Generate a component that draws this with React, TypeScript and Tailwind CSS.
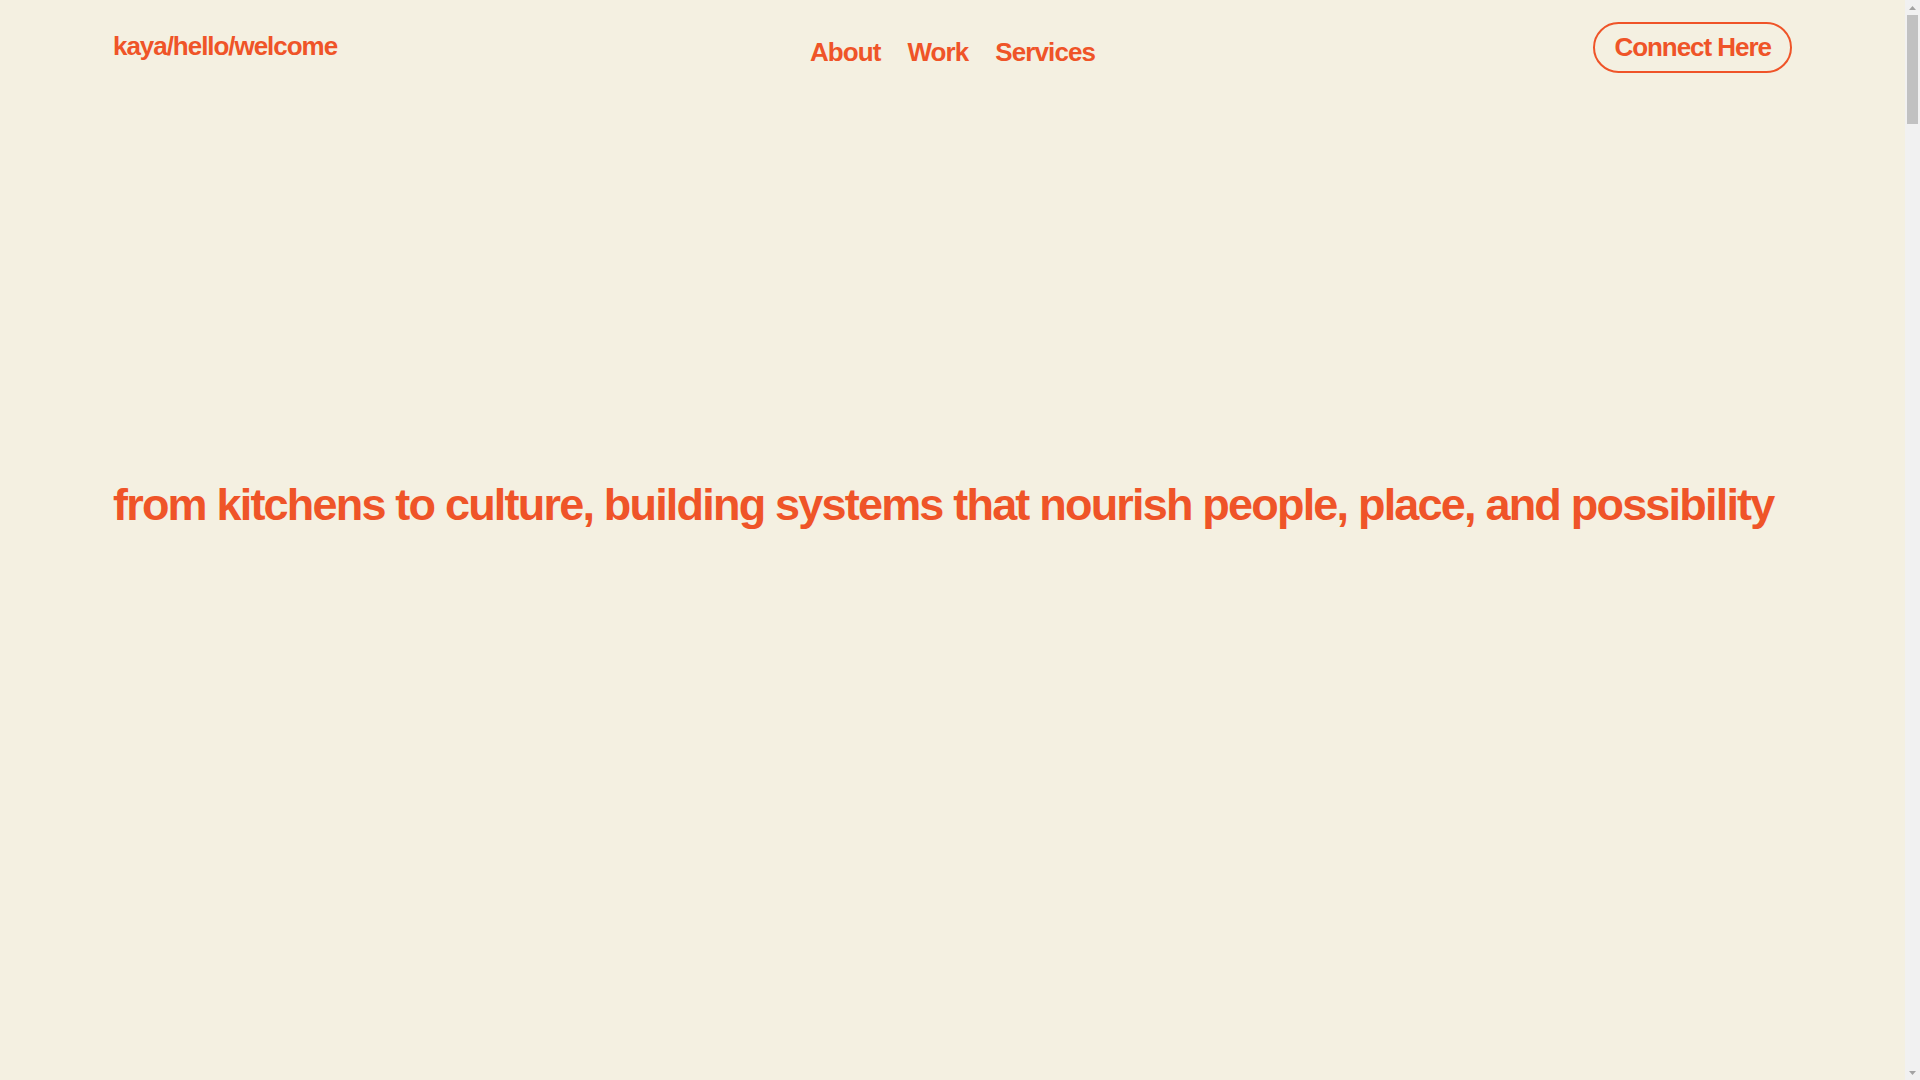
import React from 'react';

// --- Navigation links of the header ---
const navLinks = ['About', 'Work', 'Services'];

const Header = () => (
    <header className="grid grid-cols-3 items-start px-[113px] pt-[22px]">
        {/* Logo / path */}
        <a href="#" className="mt-[10px] justify-self-start text-[26px] font-bold tracking-[-0.04em] leading-[1.15]">
            kaya/hello/welcome
        </a>

        {/* Center nav */}
        <nav className="mt-[16px] flex items-center justify-center gap-[27px]">
            {navLinks.map((label) => (
                <a key={label} href="#" className="text-[26px] font-bold tracking-[-0.035em] leading-[1.15]">
                    {label}
                </a>
            ))}
        </nav>

        {/* Call to action */}
        <a
            href="#"
            className="justify-self-end flex h-[51px] items-center rounded-full border-2 border-[#ef5428] px-[19px] text-[26px] font-bold tracking-[-0.04em] leading-[1.15]"
        >
            Connect Here
        </a>
    </header>
);

// --- Browser scrollbar as seen in the screenshot (overlay on the right edge) ---
const FakeScrollbar = () => (
    <div className="fixed right-0 top-0 flex h-screen w-[15px] flex-col bg-[#f1f1f1]">
        <div className="flex h-[15px] items-center justify-center">
            <svg width="7" height="4" viewBox="0 0 7 4"><path d="M3.5 0L7 4H0z" fill="#a3a3a3" /></svg>
        </div>
        <div className="mx-[2px] h-[109px] bg-[#c1c1c1]" />
        <div className="flex-1" />
        <div className="flex h-[15px] items-center justify-center">
            <svg width="7" height="4" viewBox="0 0 7 4"><path d="M0 0H7L3.5 4z" fill="#a3a3a3" /></svg>
        </div>
    </div>
);

const App = () => {
    return (
        <div
            className="min-h-[10404px] bg-[#f4f0e1] pr-[15px] text-[#ef5428]"
            style={{ fontFamily: '"Liberation Sans", Arial, sans-serif' }}
        >
            <Header />

            {/* Hero statement */}
            <section className="px-[113px] pt-[406px]">
                <h1 className="text-[45px] font-bold tracking-[-0.04em] leading-[1.15] whitespace-nowrap">
                    from kitchens to culture, building systems that nourish people, place, and possibility
                </h1>
            </section>

            <FakeScrollbar />
        </div>
    );
};

export default App;
